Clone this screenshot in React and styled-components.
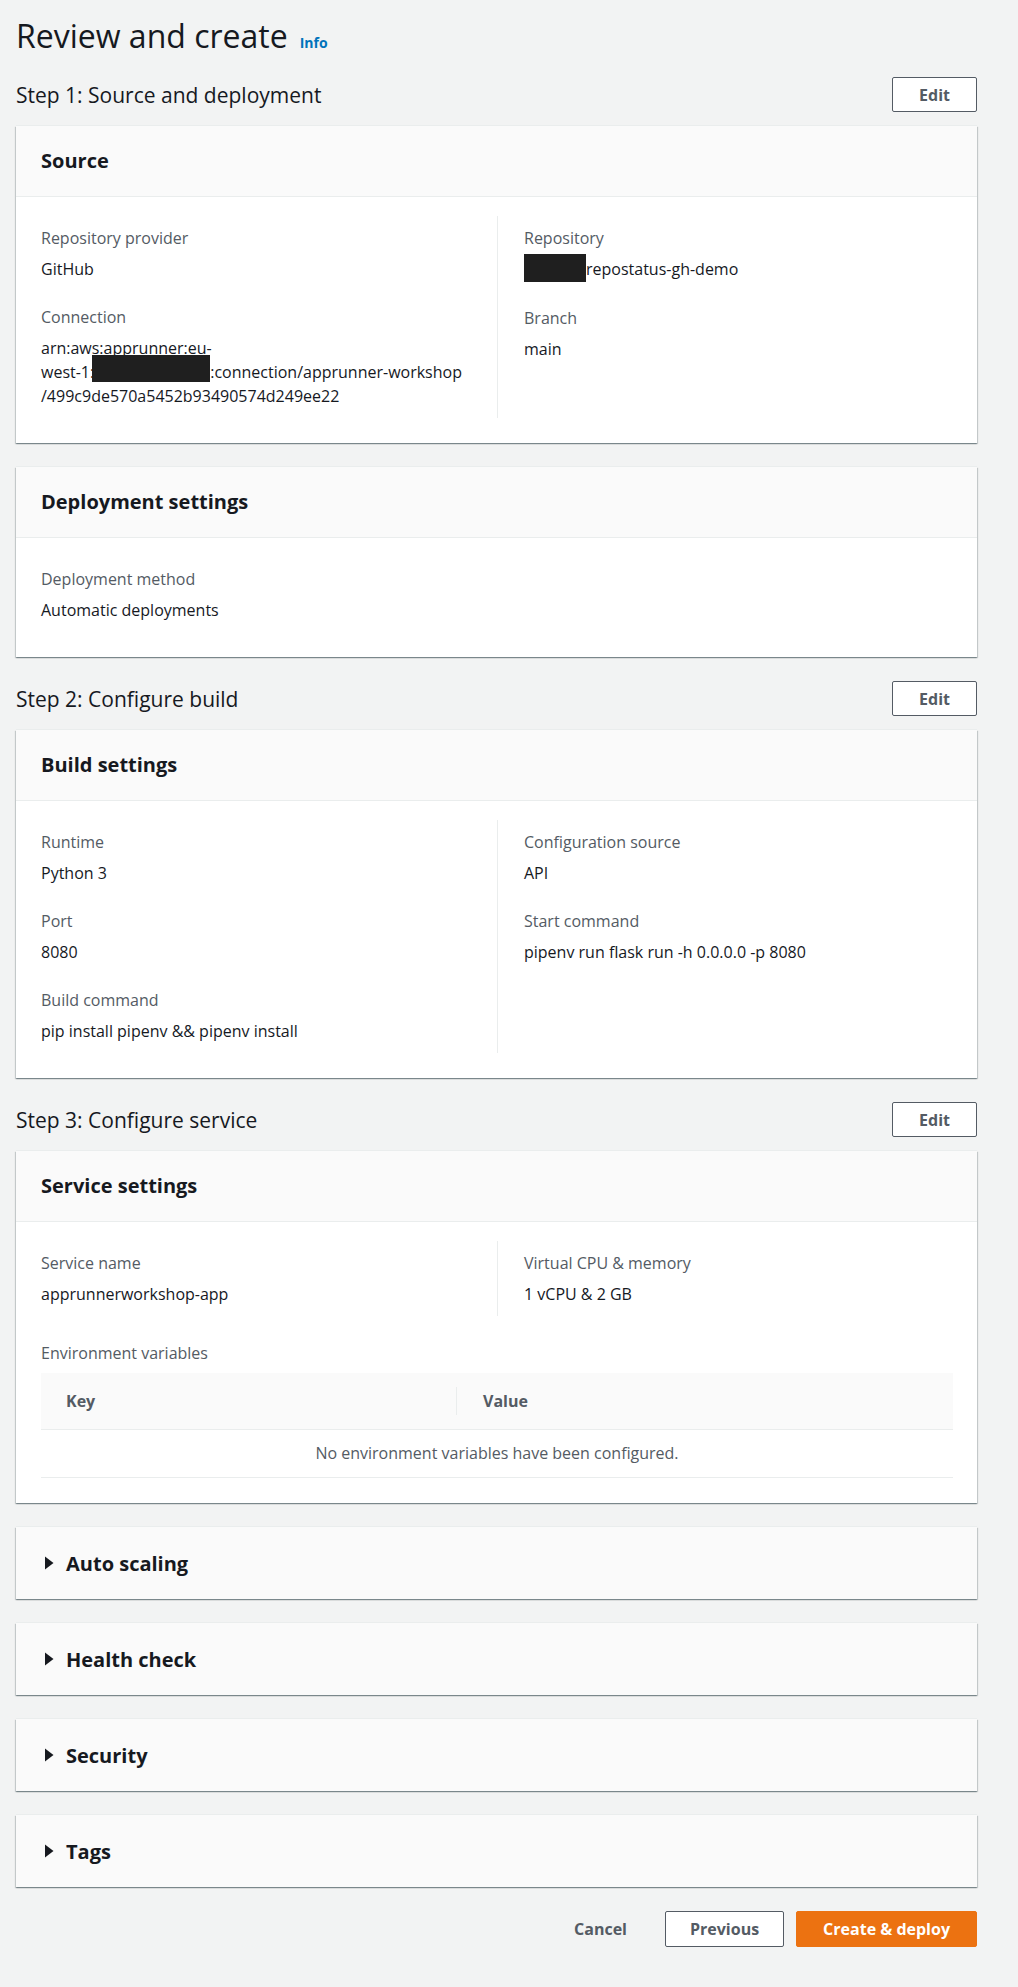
import React from 'react'
import styled, { createGlobalStyle } from 'styled-components'

const GlobalStyle = createGlobalStyle`
  body {
    margin: 0;
    background: #f2f3f3;
    font-family: "Open Sans", "Noto Sans", Arial, sans-serif;
    color: #16191f;
  }
`

const Page = styled.div`
  padding: 16px 41px 40px 16px;
`

const TitleRow = styled.div`
  display: flex;
  align-items: baseline;
  margin-bottom: 21px;
`

const Title = styled.h1`
  margin: 0;
  font-size: 32px;
  font-weight: 400;
  line-height: 40px;
  color: #16191f;
`

const InfoLink = styled.span`
  margin-left: 12px;
  font-size: 14px;
  font-weight: 700;
  color: #0073bb;
`

const StepHeader = styled.div`
  display: flex;
  align-items: center;
  justify-content: space-between;
  margin-bottom: 14px;
`

const StepTitle = styled.h2`
  margin: 0;
  font-size: 21px;
  font-weight: 400;
  line-height: 30px;
`

const Button = styled.button`
  box-sizing: border-box;
  height: ${props => props.height || 36}px;
  padding: 0 ${props => props.padX || 20}px;
  border-radius: 2px;
  font-family: inherit;
  font-size: 16px;
  font-weight: 700;
  cursor: pointer;
  border: 1px solid ${props => props.primary ? '#ec7211' : props.plain ? 'transparent' : '#545b64'};
  background: ${props => props.primary ? '#ec7211' : props.plain ? 'transparent' : '#ffffff'};
  color: ${props => props.primary ? '#ffffff' : '#545b64'};
`

const Card = styled.section`
  background: #ffffff;
  margin-bottom: 24px;
  box-shadow: 0 1px 1px 0 rgba(0, 28, 36, 0.3), 1px 1px 1px 0 rgba(0, 28, 36, 0.15),
    -1px 1px 1px 0 rgba(0, 28, 36, 0.15), 0 -1px 0 0 #eaeded;
`

const CardHeader = styled.div`
  background: #fafafa;
  padding: 21px 25px;
  border-bottom: 1px solid #eaeded;
  font-size: 20px;
  font-weight: 700;
  line-height: 28px;
`

const CardBody = styled.div`
  padding: 19px 24px 25px 25px;
  display: flex;
  flex-direction: column;
`

const Columns = styled.div`
  display: grid;
  grid-template-columns: 1fr 1fr;
`

const Col = styled.div`
  display: flex;
  flex-direction: column;
  gap: 25px;
  padding: 11px 20px 10px ${props => props.right ? 26 : 0}px;
  border-left: ${props => props.right ? '1px solid #eaeded' : 'none'};
`

const FieldLabel = styled.div`
  font-size: 16px;
  line-height: 22px;
  color: #545b64;
  margin-bottom: 8px;
`

const FieldValue = styled.div`
  font-size: 16px;
  line-height: 24px;
  color: #16191f;
  white-space: nowrap;
`

const Redacted = styled.span`
  display: inline-block;
  width: ${props => props.w}px;
  height: ${props => props.h}px;
  margin-top: -5px;
  vertical-align: ${props => props.drop}px;
  background: #1f1f1f;
`

const EnvLabel = styled(FieldLabel)`
  margin-top: 26px;
  margin-bottom: 9px;
`

const Table = styled.div`
  display: flex;
  flex-direction: column;
`

const TableHead = styled.div`
  display: grid;
  grid-template-columns: 415px 1fr;
  align-items: center;
  height: 56px;
  background: #fafafa;
  border-bottom: 1px solid #eaeded;
`

const HeadCell = styled.div`
  font-size: 16px;
  font-weight: 700;
  color: #545b64;
  line-height: 28px;
  padding-left: ${props => props.divided ? 26 : 25}px;
  border-left: ${props => props.divided ? '1px solid #eaeded' : 'none'};
`

const EmptyRow = styled.div`
  padding: 11px 0 12px;
  text-align: center;
  font-size: 16px;
  line-height: 24px;
  color: #545b64;
  border-bottom: 1px solid #eaeded;
`

const Collapsed = styled(Card)`
  background: #fafafa;
  display: flex;
  align-items: center;
  gap: 12px;
  height: 72px;
  padding: 0 25px 0 28px;
  box-sizing: border-box;
  font-size: 20px;
  font-weight: 700;
`

const Actions = styled.div`
  display: flex;
  justify-content: flex-end;
  gap: 12px;
`

const Caret = () => (
  <svg width="10" height="14" viewBox="0 0 10 14">
    <polygon points="1,0.5 9.5,7 1,13.5" fill="#16191f" />
  </svg>
)

const Field = ({ label, children }) => (
  <div>
    <FieldLabel>{label}</FieldLabel>
    <FieldValue>{children}</FieldValue>
  </div>
)

const Step = ({ title }) => (
  <StepHeader>
    <StepTitle>{title}</StepTitle>
    <Button height={35} padX={26}>Edit</Button>
  </StepHeader>
)

const InfoCard = ({ title, left, right }) => (
  <Card>
    <CardHeader>{title}</CardHeader>
    <CardBody>
      <Columns>
        <Col>{left}</Col>
        {right && <Col right>{right}</Col>}
      </Columns>
    </CardBody>
  </Card>
)

const collapsedSections = ['Auto scaling', 'Health check', 'Security', 'Tags']

export default function App() {
  return (
    <Page>
      <GlobalStyle />
      <TitleRow>
        <Title>Review and create</Title>
        <InfoLink>Info</InfoLink>
      </TitleRow>

      <Step title="Step 1: Source and deployment" />
      <InfoCard
        title="Source"
        left={
          <>
            <Field label="Repository provider">GitHub</Field>
            <Field label="Connection">
              arn:aws:apprunner:eu-<br />
              west-1:<Redacted w={118} h={27} drop={-4} style={{ marginLeft: -2 }} />:connection/apprunner-workshop<br />
              /499c9de570a5452b93490574d249ee22
            </Field>
          </>
        }
        right={
          <>
            <Field label="Repository">
              <Redacted w={62} h={28} drop={-7} />repostatus-gh-demo
            </Field>
            <Field label="Branch">main</Field>
          </>
        }
      />
      <InfoCard
        title="Deployment settings"
        left={<Field label="Deployment method">Automatic deployments</Field>}
      />

      <Step title="Step 2: Configure build" />
      <InfoCard
        title="Build settings"
        left={
          <>
            <Field label="Runtime">Python 3</Field>
            <Field label="Port">8080</Field>
            <Field label="Build command">pip install pipenv &amp;&amp; pipenv install</Field>
          </>
        }
        right={
          <>
            <Field label="Configuration source">API</Field>
            <Field label="Start command">pipenv run flask run -h 0.0.0.0 -p 8080</Field>
          </>
        }
      />

      <Step title="Step 3: Configure service" />
      <Card>
        <CardHeader>Service settings</CardHeader>
        <CardBody>
          <Columns>
            <Col>
              <Field label="Service name">apprunnerworkshop-app</Field>
            </Col>
            <Col right>
              <Field label="Virtual CPU &amp; memory">1 vCPU &amp; 2 GB</Field>
            </Col>
          </Columns>
          <EnvLabel>Environment variables</EnvLabel>
          <Table>
            <TableHead>
              <HeadCell>Key</HeadCell>
              <HeadCell divided>Value</HeadCell>
            </TableHead>
            <EmptyRow>No environment variables have been configured.</EmptyRow>
          </Table>
        </CardBody>
      </Card>

      {collapsedSections.map(name => (
        <Collapsed key={name}>
          <Caret />
          {name}
        </Collapsed>
      ))}

      <Actions>
        <Button plain padX={25}>Cancel</Button>
        <Button padX={24}>Previous</Button>
        <Button primary padX={26}>Create &amp; deploy</Button>
      </Actions>
    </Page>
  )
}
